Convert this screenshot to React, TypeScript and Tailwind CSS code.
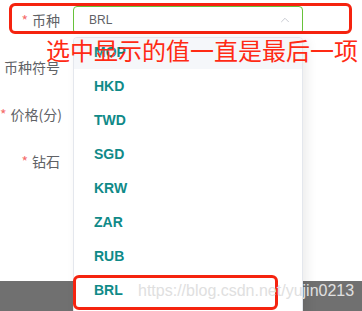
import { ChevronUp } from "lucide-react";

const currencies = ["MOP", "HKD", "TWD", "SGD", "KRW", "ZAR", "RUB", "BRL"];

const fields = [
  { label: "币种", required: true },
  { label: "币种符号", required: false },
  { label: "价格(分)", required: true },
  { label: "钻石", required: true },
];

const cjk = "font-['Noto_Sans_CJK_SC',sans-serif]";

const App = () => {
  return (
    <div className="relative w-[362px] h-[311px] overflow-hidden bg-white flex flex-col">
      {/* form rows */}
      <div className="flex flex-col gap-[19px] pt-[6px]">
        {fields.map((f, i) => (
          <div key={f.label} className="flex items-center h-[28px]">
            <div className={`w-[60px] text-right text-[14px] text-[#606266] whitespace-nowrap ${cjk}`}>
              {f.required && <span className="text-[#f56c6c] mr-[4px]">*</span>}
              {f.label}
            </div>
            {i === 0 && (
              <div className="ml-[13px] w-[230px] h-[28px] border border-[#67c23a] rounded-[4px] flex items-center justify-between pl-[15px] pr-[10px]">
                <span className="text-[12px] text-[#606266] font-['Liberation_Sans',sans-serif]">BRL</span>
                <ChevronUp size={14} strokeWidth={1.5} className="text-[#c0c4cc]" />
              </div>
            )}
          </div>
        ))}
      </div>

      {/* bottom bar */}
      <div className="mt-auto h-[30px] bg-[#707070]" />

      {/* red highlight around the select */}
      <div className="absolute left-[9px] top-[3px] w-[343px] h-[31px] border-[3px] border-[#f5230f] rounded-[6px]" />

      {/* dropdown */}
      <div className="absolute left-[73px] top-[37px] w-[230px] h-[280px] bg-white border border-[#e4e7ed] rounded-[4px] shadow-[4px_2px_12px_rgba(0,0,0,0.08)] overflow-hidden">
        <ul className="-mt-[3px]">
          {currencies.map((c, i) => (
            <li
              key={c}
              className={`h-[34px] flex items-center pl-[20px] text-[14px] font-bold text-[#0f8a88] font-['Liberation_Sans',sans-serif] ${i === 0 ? "bg-[#f5f7fa]" : ""}`}
            >
              {c}
            </li>
          ))}
        </ul>
      </div>

      {/* annotation */}
      <div className={`absolute left-[46px] top-[35px] text-[24px] leading-[30px] text-[#ff2a14] whitespace-nowrap ${cjk}`}>
        选中显示的值一直是最后一项
      </div>

      {/* red highlight around last item */}
      <div className="absolute left-[73px] top-[275px] w-[205px] h-[35px] border-[3px] border-[#f5230f] rounded-[6px]" />

      {/* watermark */}
      <div className="absolute left-[138px] top-[281px] text-[16px] leading-[20px] text-[#e0e0e0] font-['Liberation_Sans',sans-serif]">
        https://blog.csdn.net/yujin0213
      </div>
    </div>
  );
};

export default App;
